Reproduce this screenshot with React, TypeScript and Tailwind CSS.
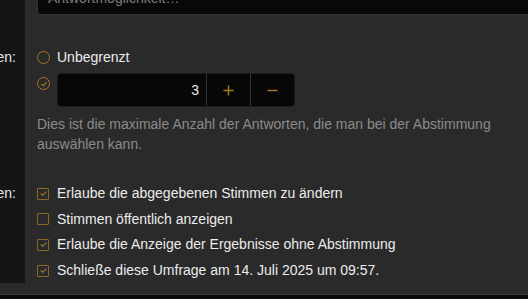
import { ReactNode } from "react";

const font = { fontFamily: '"Liberation Sans", Arial, sans-serif' };

function Label({ text }: { text: string }) {
  return (
    <div className="flex justify-end overflow-hidden whitespace-nowrap pr-[9px] text-[14px] leading-[20px] text-[#e6e6e6]">
      <span>{text}</span>
    </div>
  );
}

function Row({ label, children }: { label?: ReactNode; children: ReactNode }) {
  return (
    <div className="grid grid-cols-[25px_1fr]">
      <div className="bg-[#151515]">{label}</div>
      <div className="pl-[12px]">{children}</div>
    </div>
  );
}

function Radio({ checked }: { checked?: boolean }) {
  return (
    <span className="flex h-[13px] w-[13px] shrink-0 items-center justify-center rounded-full border-[1.5px] border-[#a4772b]">
      {checked && (
        <svg viewBox="0 0 10 10" className="h-[8px] w-[8px]" fill="none" stroke="#a4772b" strokeWidth="1.4">
          <path d="M1.8 5.2 L4 7.2 L8.2 2.8" />
        </svg>
      )}
    </span>
  );
}

function Check({ checked }: { checked?: boolean }) {
  return (
    <span className="flex h-[12px] w-[12px] shrink-0 items-center justify-center rounded-[1px] border-[1.5px] border-[#8d6726]">
      {checked && (
        <svg viewBox="0 0 10 10" className="h-[9px] w-[9px]" fill="none" stroke="#a4772b" strokeWidth="1.3">
          <path d="M2 5 L4.2 7 L8.2 3" />
        </svg>
      )}
    </span>
  );
}

const options = [
  { text: "Erlaube die abgegebenen Stimmen zu ändern", checked: true },
  { text: "Stimmen öffentlich anzeigen", checked: false },
  { text: "Erlaube die Anzeige der Ergebnisse ohne Abstimmung", checked: true },
  { text: "Schließe diese Umfrage am 14. Juli 2025 um 09:57.", checked: true },
];

export default function App() {
  return (
    <div className="flex h-[299px] w-[528px] flex-col overflow-hidden bg-[#2a2a2a]" style={font}>
      <div className="flex-1">
        <Row>
          <div className="h-[15px] overflow-hidden">
            <div className="-mt-[19px] flex h-[34px] w-[520px] items-center rounded-[4px] border border-[#333] bg-[#080808] px-[10px] text-[14px] text-[#7d7d7d]">
              Antwortmöglichkeit…
            </div>
          </div>
        </Row>

        <Row
          label={
            <div className="pt-[32px]">
              <Label text="Maximale Antworten:" />
            </div>
          }
        >
          <div className="pt-[32px]">
            <div className="flex h-[20px] items-center gap-[7px] text-[14px] text-[#ececec]">
              <Radio />
              <span>Unbegrenzt</span>
            </div>
            <div className="mt-[6px] flex items-start gap-[7px]">
              <div className="mt-[4px]">
                <Radio checked />
              </div>
              <div className="flex h-[34px] w-[238px] overflow-hidden rounded-[4px] border border-[#1c1c1c] bg-[#070707] text-[14px]">
                <div className="flex w-[148px] items-center justify-end pr-[7px] text-[#ececec]">3</div>
                <div className="flex w-[44px] items-center justify-center border-l border-[#333]">
                  <svg viewBox="0 0 12 12" className="h-[11px] w-[11px]" stroke="#a4772b" strokeWidth="1.6">
                    <path d="M6 0.5 V11.5 M0.5 6 H11.5" />
                  </svg>
                </div>
                <div className="flex flex-1 items-center justify-center border-l border-[#333]">
                  <svg viewBox="0 0 12 12" className="h-[11px] w-[11px]" stroke="#a4772b" strokeWidth="1.6">
                    <path d="M0.5 6 H11.5" />
                  </svg>
                </div>
              </div>
            </div>
            <p className="mt-[8px] w-[470px] text-[14px] leading-[19.5px] text-[#8a8a8a]">
              Dies ist die maximale Anzahl der Antworten, die man bei der Abstimmung auswählen kann.
            </p>
          </div>
        </Row>

        <Row
          label={
            <div className="pt-[29px]">
              <Label text="Optionen:" />
            </div>
          }
        >
          <div className="flex flex-col pt-[27px]">
            {options.map((o) => (
              <div key={o.text} className="flex h-[25.6px] items-center gap-[8px] text-[14px] text-[#ececec]">
                <Check checked={o.checked} />
                <span className="whitespace-nowrap">{o.text}</span>
              </div>
            ))}
          </div>
        </Row>
      </div>
      <div className="h-[5px] border-t border-[#3a3a3a] bg-[#0b0b0b]" />
    </div>
  );
}
